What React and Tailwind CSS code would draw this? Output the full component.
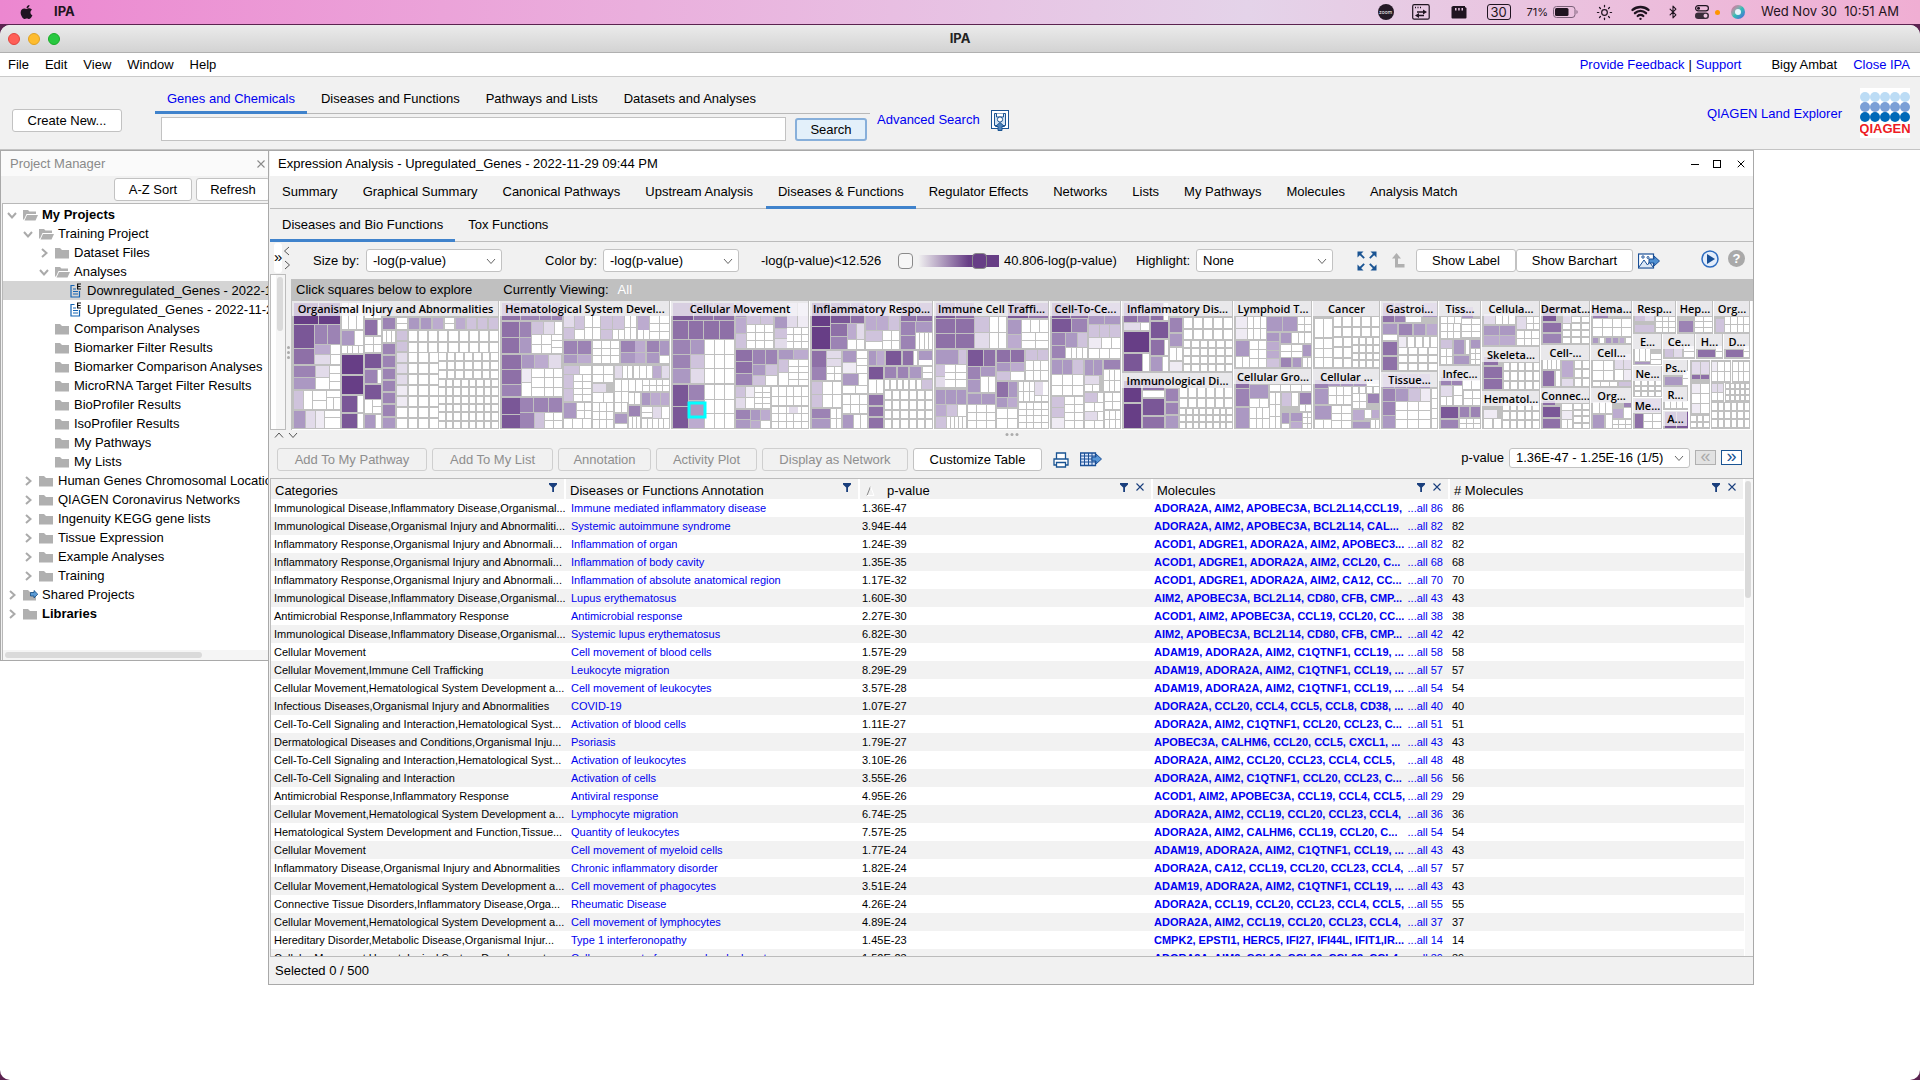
import React from "react";
import { Wifi, Bluetooth, Sun, X } from "lucide-react";
import { FaApple } from "react-icons/fa";

/* ---------- treemap ---------- */

const SHADES = ["#ffffff", "#efebf4", "#e2dbea", "#cfc3dc", "#bcabcf", "#ab98c2", "#9c83b4", "#8e70a7", "#7a5797", "#673e86"];

// Block format: "x1 y1 x2 y2 [cols rows [shades]]"; one shade digit for each cell.
// A leading "~" widens the gaps between the cells of the block.
const SECTIONS = [
  {
    dx: -28,
    sx: 2.8,
    groups: [
      {
        name: "Organismal Injury and Abnormalities",
        box: [78, 82, 657, 463],
        cells:
          "84 87 152 149 1 1 9|154 87 213 149 1 1 9|84 153 139 222 1 1 8|142 153 213 209 2 1 66|84 225 139 270 1 1 7|142 212 185 270 1 2 42|187 212 213 270 1 2|84 276 143 345 1 2 65|145 276 183 345 1 2 20|185 276 213 345 1 3|84 352 109 405 1 1 3|111 352 134 405|136 352 174 405 1 2|176 352 213 370|176 372 213 405 2 1|84 412 116 462 1 1 5|118 412 143 462 1 1 2|145 412 168 462 1 1 1|170 412 213 430|170 432 213 462|218 87 277 166 3 1|218 170 252 213 1 1 5|254 170 277 213|218 216 277 238 4 1|218 243 277 300 1 1 9|218 305 277 361 1 1 9|218 366 260 415 1 1 8|262 366 277 415|218 420 260 462 1 1 8|262 420 277 462|283 87 328 132 2 1|283 138 316 184 1 1 7|318 138 328 184|283 189 328 235 2 2|283 240 328 283 1 1 8|283 288 316 327 1 1 6|318 288 328 327|283 332 328 374 1 1 8|283 377 303 417|305 377 328 417 1 2|283 422 312 462 1 1 5|314 422 328 462|333 132 368 165 1 1 6|333 170 368 205 3 1|~333 210 368 462 1 7 6666665|372 132 400 165 1 2|~372 170 400 462 1 9 332221100|~406 132 502 165 3 1 554|507 132 533 165 1 2|~538 132 656 165 4 1 4333|~406 170 656 233 9 2|~406 238 486 462 3 7|~490 238 656 312 7 3|~490 318 656 462 8 6",
      },
      {
        name: "Hematological System Devel...",
        box: [660, 82, 1137, 463],
        cells:
          "666 87 770 137 2 1 76|772 87 833 137 2 1 66|666 143 714 238 1 2 77|716 143 747 238 1 2 65|750 143 812 180 2 1 32|814 143 833 180|750 183 804 238 2 2|806 183 833 238 1 3|666 244 720 330 1 2 77|666 332 720 366 1 1 6|722 244 831 283 3 1 542|722 285 747 366 1 2 10|750 285 785 366 1 3|787 285 833 366 2 3|666 373 716 420 1 1 8|666 422 716 462 1 1 8|718 373 833 415 3 1 666|718 417 756 462 1 1 6|758 417 785 462 1 1 3|787 417 833 462 2 2|840 127 868 195 1 2 23|870 127 896 165 1 1 3|870 167 896 195|898 127 940 195 2 2|943 127 1008 165 2 1 33|943 167 975 195 1 1 3|977 167 1008 195 2 1|1010 127 1042 195 2 2|1047 127 1077 167 1 1 4|1047 169 1077 195 2 1|1080 127 1135 195 2 3|840 202 916 240 2 1 66|840 242 916 268 2 1 54|920 202 995 268 3 3|1000 202 1038 268 1 2 65|1040 202 1068 268 1 2 44|1072 202 1106 268 1 2 65|1108 202 1135 243 1 1 5|1108 245 1135 268|840 275 882 300 1 1 3|884 275 916 300|840 303 865 380 1 2 33|868 303 916 380 2 4|920 275 978 325 2 2|920 330 958 354 1 1 2|920 356 978 384 2 1|982 275 1003 312 1 1 2|1005 275 1030 312 2 1|1035 275 1085 312 3 1|1089 275 1112 312 1 1 4|1114 275 1135 312 1 1 2|982 318 1018 384 2 2|1022 318 1058 350 2 1|1060 318 1135 350 4 2|1058 356 1135 394 3 1 544|1022 356 1054 390 2 1|840 388 874 432 1 1 5|876 388 916 432 2 2|840 435 916 462 3 1|920 388 978 462 3 3|982 388 1016 415 2 1|982 419 1016 447 1 1 5|982 449 1016 462|1022 396 1054 427 1 1 6|1022 430 1054 462 3 1|1058 398 1085 430 1 2|1089 398 1112 432 1 1 2|1114 398 1135 432|1058 435 1135 462 5 1",
      },
      {
        name: "Cellular Movement",
        box: [1140, 82, 1526, 463],
        cells:
          "1146 87 1316 137 3 1 877|1146 142 1316 195 4 1 7777|1146 198 1193 327 1 3 665|1195 198 1232 327 1 3 532|1235 198 1316 327 3 3|1146 334 1187 462 1 2 88|1189 334 1232 378 1 1 6|1189 380 1232 427 1 1 5|1189 429 1232 462 1 1 4|1235 334 1316 462 3 3|1322 87 1350 222 1 3 543|1353 87 1425 150 2 1 33|1353 152 1425 222 3 3|1430 128 1463 162 1 1 5|1465 87 1524 160 2 1 21|1430 164 1463 222 1 2 32|1465 162 1524 222 3 3|1322 228 1366 332 1 3 776|1369 228 1436 270 2 1 66|1369 272 1436 303 2 1 53|1369 306 1436 332 2 1 30|1442 228 1524 255 2 1 54|1442 258 1467 332 1 2 30|1470 258 1524 332 2 4|1322 338 1347 402 1 2 32|1350 338 1372 402 1 2 10|1374 338 1418 402 2 4|1422 338 1524 393 5 2|1322 408 1360 462 1 2 65|1363 408 1418 437 2 1 54|1363 440 1418 462 2 1 40|1422 398 1524 462 5 3|1470 398 1495 417 1 1 2",
      },
    ],
  },
  {
    dx: 507,
    sx: 3,
    groups: [
      {
        name: "Inflammatory Respo...",
        box: [33, 82, 402, 463],
        cells:
          "39 87 94 225 1 2 99|96 87 153 147 1 1 8|155 87 195 147 1 1 7|96 150 144 225 1 2 76|146 150 172 195 1 1 4|174 150 195 195 1 1 2|146 197 195 225 2 1|201 87 300 167 3 1 443|201 170 250 202 1 1 3|252 170 300 225 2 2|201 204 250 225|306 87 399 142 2 1 77|306 144 348 225 1 2 66|350 144 399 174 1 1 5|350 177 399 225 4 1|39 232 82 278 1 1 7|84 232 126 276 1 2 22|39 280 82 318 1 1 6|84 278 126 318 2 2|132 232 172 264 1 1 5|132 266 172 296 1 1 1|174 232 205 296 1 3|132 300 177 333 1 1 5|179 300 205 333|132 336 205 358 2 1|210 232 255 273 2 1 54|261 232 306 273 1 1 8|312 232 342 273 1 1 7|344 232 355 273|360 232 399 257 1 1 5|360 259 399 273|210 279 252 315 1 1 8|~258 279 366 311 3 1 665|372 279 399 311 1 2|210 319 252 358 2 1|~258 318 365 345 6 1|369 318 399 345 1 1 3|39 324 69 398 1 2 33|71 324 126 398 2 2|39 405 94 462 1 2 65|96 405 126 462 2 2|132 364 205 416 3 2|132 422 162 462 1 1 5|164 422 205 462 2 1|~210 364 252 462 1 3 777|~258 351 399 462 6 4",
      },
      {
        name: "Immune Cell Traffi...",
        box: [405, 82, 750, 463],
        cells:
          "411 87 525 133 2 1 87|411 136 525 221 2 2 7777|528 128 570 221 1 2 32|572 128 620 221 2 2|627 87 747 133 2 1 87|627 137 666 221 1 2 54|668 137 747 174 3 1|668 176 747 221 2 2|411 228 443 270 1 1 5|445 228 477 270 1 1 5|479 228 501 270 1 1 3|411 273 437 340 1 2 32|439 273 501 340 2 3|411 348 501 389 3 1 555|411 392 442 462 1 2 43|444 392 474 426 1 1 3|476 392 501 426|444 428 501 462 5 1|507 228 552 276 1 1 8|554 228 588 276 1 1 7|507 279 543 354 1 2 65|545 279 588 306 1 1 5|545 308 588 354 2 1|507 360 588 390 2 1 55|507 393 588 462 3 3|594 228 675 264 2 1 77|594 266 675 290 2 1 54|594 293 675 318 2 1 30|594 324 627 369 1 1 7|629 324 654 369 1 1 5|594 371 654 400 2 1 54|594 404 654 462 2 2|680 228 747 258 2 1 33|680 261 747 318 3 2|660 324 704 380 3 2|708 324 731 364 1 1 2|733 324 747 364|708 366 747 380 2 1|660 386 747 462 4 4",
      },
      {
        name: "Cell-To-Ce...",
        box: [753, 82, 966, 463],
        cells:
          "759 87 866 131 2 1 87|759 136 817 173 1 1 8|819 136 864 173 1 1 6|759 177 798 212 1 1 6|800 177 834 218 1 1 5|836 177 864 218 1 1 3|759 215 798 251 1 1 6|800 221 864 251 4 1|870 87 963 150 2 1 55|870 153 963 189 3 1 333|870 192 907 222 1 1 1|909 192 963 222 2 1|870 224 963 251 3 1|759 258 852 300 3 1 553|759 303 852 363 3 2|858 258 910 303 2 1 55|915 258 963 285 1 1 6|915 289 963 350 3 2|858 307 900 330 1 1 2|858 333 900 350 2 1|759 369 795 462 1 3 331|798 369 852 462 2 4|858 357 894 384 1 1 3|896 357 911 384|858 387 911 412 2 1|917 357 963 405 2 2|858 415 895 438 1 1 2|897 415 911 438|858 441 911 462 2 1|917 412 963 462 3 2",
      },
      {
        name: "Inflammatory Dis...",
        box: [969, 82, 1303, 293],
        cells:
          "975 87 1014 143 1 1 7|1016 87 1050 143 1 1 6|975 147 1023 168 1 1 2|1025 147 1050 168|975 174 1050 234 1 1 9|975 240 1028 291 1 1 8|1031 240 1050 291|1056 87 1092 138 1 1 7|1094 87 1107 138|1056 143 1107 192 1 1 8|1056 198 1095 243 1 1 7|1097 198 1107 243|1056 249 1089 291 1 1 5|1091 249 1107 291|1113 132 1149 174 1 1 6|1113 180 1149 216 1 1 5|1113 221 1149 258 2 1|1113 264 1149 291 1 1 1|~1155 132 1300 196 5 2|~1155 202 1300 291 6 4",
      },
      {
        name: "Immunological Di...",
        box: [969, 298, 1303, 463],
        cells:
          "975 320 1026 384 1 1 9|975 390 1026 462 1 1 9|1032 320 1095 348 1 1 7|1032 350 1095 369|1032 375 1095 423 1 1 8|1032 429 1095 462 1 1 7|~1101 345 1137 462 1 3 665|~1143 343 1300 400 6 2|~1143 406 1300 462 8 3",
      },
    ],
  },
  {
    dx: 977,
    sx: 3,
    groups: [
      {
        name: "Lymphoid T...",
        box: [-104, 82, 128, 281],
        cells:
          "-98 130 -66 196 1 2 11|-64 128 -8 196 3 2|-5 130 40 172 1 1 5|42 130 84 172 1 1 5|88 130 127 172 2 2|-98 202 -60 247 1 1 5|-58 202 -8 280 2 3|-98 250 -60 280 2 1|-5 178 30 280 1 4 5443|36 178 66 207 1 1 5|68 178 127 207 3 1|36 212 98 248 2 2|102 212 127 246 1 1 5|36 252 66 279 1 1 6|72 252 96 279 1 1 5|102 252 127 279 2 1",
      },
      {
        name: "Cellular Gro...",
        box: [-104, 286, 128, 463],
        cells:
          "-98 318 -60 343 1 1 7|-98 345 -60 395 1 1 6|-98 401 -60 462 1 1 5|-57 332 -3 372 1 1 5|-57 374 -3 398 2 1|-57 402 0 462 3 2|3 332 127 352 4 1|3 358 33 462 2 3|38 358 67 397 1 1 3|69 358 88 397|92 357 127 390 1 1 6|92 394 127 412 2 1|38 417 60 448 1 1 5|65 417 98 440 1 1 5|65 444 98 462 1 1 4|102 417 127 462 2 3|38 450 60 462",
      },
      { name: "Cancer", box: [132, 82, 333, 281], cells: "138 135 190 190 2 1|138 196 190 280 2 3|~194 128 331 187 5 2|~194 193 246 280 2 3|~252 193 331 280 4 4" },
      {
        name: "Cellular ...",
        box: [132, 286, 333, 463],
        cells:
          "138 318 176 342 1 1 6|138 345 176 390 1 1 5|138 396 186 434 1 1 5|138 437 186 462 2 1|178 318 330 335 4 1 5550|180 338 246 390 3 2|190 395 247 462 2 3|~252 338 330 356 4 1|297 361 330 388 1 1 6|252 361 292 402 2 2|252 408 285 438 1 1 4|309 408 330 432 1 1 4|288 408 305 432|252 444 303 462 1 1 5|306 438 330 462 2 1",
      },
      {
        name: "Gastroi...",
        box: [336, 82, 506, 291],
        cells:
          "342 87 375 143 1 1 7|377 87 408 143 1 1 6|412 128 456 143|462 87 504 129 1 1 5|342 151 384 180 1 1 5|390 151 429 183 1 1 6|435 151 468 182 1 1 5|474 151 504 182 1 1 4|342 183 384 198|342 205 384 243 1 1 7|342 249 384 289 1 1 7|390 189 412 218 1 1 1|~417 189 504 218 4 1|~390 223 504 289 4 3",
      },
      {
        name: "Tissue...",
        box: [336, 295, 506, 463],
        cells: "342 300 484 342 4 1 5555|342 346 378 462 1 3 665|381 346 417 381 1 1 5|420 346 453 381 1 1 3|455 346 484 381 1 1 1|381 384 484 462 3 3|490 346 504 462 1 4",
      },
      {
        name: "Tiss...",
        box: [510, 82, 635, 272],
        cells: "515 128 575 147 3 1|578 100 612 132 1 1 5|515 150 573 192 3 2|580 135 634 190 2 3|515 198 550 222 1 1 3|555 198 586 241 1 1 5|590 198 601 240|606 198 634 221 1 1 5|515 226 550 270 2 2|555 247 600 270 1 1 5|606 226 634 270 2 3",
      },
      {
        name: "Infec...",
        box: [510, 277, 635, 463],
        cells: "515 310 546 333 1 1 6|549 310 579 333 1 1 6|582 318 634 345 2 1|515 337 550 366 1 1 2|515 369 550 392 2 1|554 337 580 392 1 2|584 350 634 392 2 2|515 399 567 432 1 1 8|573 399 600 429 1 1 6|606 399 634 429 1 1 6|515 438 567 462 1 1 6|573 435 634 462 3 2",
      },
      { name: "Cellula...", box: [639, 82, 813, 215], cells: "645 120 678 150 1 1 2|680 120 738 150 3 1|645 156 738 212 2 2 5544|744 128 772 165 1 1 2|774 128 810 165 2 2|744 170 810 212 3 2" },
      { name: "Skeleta...", box: [639, 219, 813, 347], cells: "645 250 686 272 1 1 7|645 279 699 345 1 2 77|~705 267 810 345 5 3" },
      { name: "Hematol...", box: [639, 351, 813, 463], cells: "645 408 684 431 1 1 1|~645 436 697 462 2 1|~703 388 810 462 5 3" },
      { name: "Dermat...", box: [816, 82, 963, 210], cells: "822 100 861 141 1 1 8|822 147 876 174 1 1 7|822 180 876 206 1 1 6|~882 128 961 206 3 4|882 110 905 147 1 1 2" },
      { name: "Cell-...", box: [816, 214, 963, 338], cells: "822 258 873 285 4 1|822 291 855 335 1 1 7|860 291 873 335|879 260 912 310 1 1 4|879 315 912 335 1 1 2|~917 262 961 335 2 3" },
      { name: "Connec...", box: [816, 342, 963, 463], cells: "822 380 858 394 1 1 7|822 399 873 429 1 1 8|822 436 873 462 1 1 7|879 412 909 434 1 1 1|879 390 909 407|879 437 909 462 2 1|~914 390 961 462 2 4" },
      { name: "Hema...", box: [966, 82, 1089, 210], cells: "972 110 1017 132 1 1 6|972 134 1087 185 4 2|~972 192 1087 206 6 1 505540" },
      { name: "Cell...", box: [966, 214, 1089, 338], cells: "972 260 1033 317 2 2|1037 240 1087 285 2 1 22|1037 287 1087 317 2 1 01|972 323 1045 335 3 1|1050 323 1087 335 1 1 3" },
      { name: "Org...", box: [966, 342, 1089, 463], cells: "972 385 1028 417 3 1|972 423 1005 462 1 1 5|1010 423 1028 462|1032 405 1062 432 1 1 4|1064 388 1087 398 1 1 6|1064 402 1087 432|1032 437 1087 462 3 2" },
      { name: "Resp...", box: [1093, 82, 1221, 176], cells: "1098 110 1127 140 1 1 3|1129 110 1155 140 1 1 2|1098 152 1156 173 1 1 3|1160 128 1218 173 3 3" },
      { name: "Hep...", box: [1225, 82, 1331, 176], cells: "1230 140 1273 173 1 1 6|1278 128 1328 173 2 3" },
      { name: "Org...", box: [1335, 82, 1442, 176], cells: "1341 135 1365 173 1 1 3|1369 128 1440 173 4 2" },
      { name: "E...", box: [1093, 180, 1178, 271], cells: "1098 225 1143 260 3 1|1098 263 1143 270 1 1 5|1146 240 1177 270 1 2" },
      { name: "Ce...", box: [1182, 180, 1278, 253], cells: "1188 215 1240 250 2 1 32|1244 215 1275 250 1 2" },
      { name: "H...", box: [1282, 180, 1361, 253], cells: "1288 228 1337 250 1 1 7|1341 215 1358 250 1 2" },
      { name: "D...", box: [1365, 180, 1442, 253], cells: "1371 228 1421 250 1 1 7|1425 215 1440 250 1 2" },
      { name: "Ne...", box: [1093, 275, 1178, 367], cells: "~1098 320 1177 367 4 3" },
      { name: "Me...", box: [1093, 371, 1178, 463], cells: "1098 376 1177 414 1 1 5|1098 420 1122 462 1 1 7|1126 420 1177 462 2 2" },
      { name: "Ps...", box: [1182, 257, 1258, 336], cells: "1188 309 1239 332 1 1 5|1243 290 1256 332 1 2" },
      { name: "R...", box: [1182, 339, 1258, 406], cells: "1188 380 1256 403 4 1" },
      { name: "A...", box: [1182, 410, 1258, 463], cells: "1188 415 1256 462 2 1 88" },
      { box: [1263, 257, 1323, 323], cells: "1269 265 1293 300 1 1 2|1297 265 1320 300 1 1 2|1269 303 1320 315 2 1 77" },
      { box: [1326, 257, 1385, 323], cells: "1330 265 1382 320 3 2 100000" },
      { box: [1389, 257, 1442, 323], cells: "1393 265 1440 320 3 2" },
      { box: [1263, 327, 1323, 419], cells: "1268 330 1320 418 2 3 100010" },
      { box: [1326, 327, 1365, 381], cells: "1330 330 1362 378 2 2 2200" },
      { box: [1369, 327, 1442, 381], cells: "~1372 330 1440 378 5 3" },
      { box: [1263, 423, 1323, 463], cells: "~1267 427 1320 460 3 2" },
      { box: [1326, 385, 1442, 463], cells: "~1330 388 1440 460 6 3" },
    ],
  },
];

function groupCells(group, X, Y) {
  const out = [];
  group.cells.split("|").forEach((block) => {
    const gap = block[0] === "~" ? 2 : 1;
    const p = block.replace("~", "").split(" ");
    const x1 = X(+p[0]);
    const y1 = Y(+p[1]);
    const x2 = X(+p[2]);
    const y2 = Y(+p[3]);
    const cols = +(p[4] || 1);
    const rows = +(p[5] || 1);
    const shades = p[6] || "";
    for (let r = 0; r < rows; r++) {
      for (let c = 0; c < cols; c++) {
        const w = (x2 - x1 + gap) / cols;
        const h = (y2 - y1 + gap) / rows;
        const cx = Math.round(x1 + c * w);
        const cy = Math.round(y1 + r * h);
        out.push({
          x: cx,
          y: cy,
          w: Math.max(1, Math.round(x1 + (c + 1) * w) - gap - cx),
          h: Math.max(1, Math.round(y1 + (r + 1) * h) - gap - cy),
          fill: SHADES[+(shades[r * cols + c] || 0)],
        });
      }
    }
  });
  return out;
}

function Treemap() {
  const Y = (v) => Math.round(v / 3) - 27;
  return (
    <svg viewBox="0 0 1460 129" className="block w-full bg-white" role="img" aria-label="Treemap of diseases and functions">
      {SECTIONS.map((s, si) => {
        const X = (v) => Math.round(v / s.sx) + s.dx;
        return s.groups.map((g, gi) => {
          const [x1, y1, x2, y2] = [X(g.box[0]), Y(g.box[1]), X(g.box[2]), Y(g.box[3])];
          return (
            <g key={si + "-" + gi}>
              <rect x={x1} y={y1} width={x2 - x1} height={y2 - y1 + 1} fill="#c0c0c0" />
              {groupCells(g, X, Y).map((c, i) => (
                <rect key={i} x={c.x} y={c.y} width={c.w} height={c.h} fill={c.fill} />
              ))}
              {g.name && (
                <>
                  <rect x={x1} y={y1} width={x2 - x1 - 1} height="15" fill="#f6f4f9" fillOpacity="0.76" />
                  <text x={(x1 + x2) / 2} y={y1 + 12} textAnchor="middle" fontSize="11" fontWeight="600" fontFamily='"Open Sans", "Noto Sans", sans-serif' fill="#000">
                    {g.name}
                  </text>
                </>
              )}
            </g>
          );
        });
      })}
      <rect x="397" y="102" width="16" height="14" fill="none" stroke="#00ffff" strokeWidth="3" />
    </svg>
  );
}

/* ---------- icons ---------- */

const Folder = ({ open }) => (
  <svg viewBox="0 0 15 12" className="h-3 w-[15px] flex-none" fill="#b0b0b0">
    {open ? (
      <>
        <path d="M0 1h5l1.500 1.500H13V5H3.500L1 10.500H0z" />
        <path d="M4 6h11l-2.500 5.500H1.500z" />
      </>
    ) : (
      <path d="M0 1h5l2 2h7v8.500H0z" />
    )}
  </svg>
);

const SharedFolder = () => (
  <svg viewBox="0 0 15 12" className="h-3 w-[15px] flex-none">
    <path d="M0 1h5l2 2h6v8.500H0z" fill="#b0b0b0" />
    <path d="M7.500 3.500h3.500V1.500L14.800 5.200 11 9V7H7.500z" fill="#5b9bd5" stroke="#174f86" strokeWidth="0.800" />
  </svg>
);

const Doc = () => (
  <svg viewBox="0 0 12 15" className="h-[15px] w-3 flex-none" fill="none" stroke="#1464b4" strokeWidth="1.200">
    <path d="M4.500 2.500H1v11.500h8.500V8" />
    <path d="M3 6h3M3 8.500h5M3 11h5" />
    <path d="M11 1H7.600v5H11M7.600 3.500h3" stroke="#111" />
  </svg>
);

const Chevron = ({ dir = "right", className = "" }) => {
  const d = { right: "M3 1l4.500 4L3 9", left: "M7 1L2.500 5 7 9", down: "M1 3l4 4.500L9 3", up: "M1 7.500L5 3l4 4.500" }[dir];
  return (
    <svg viewBox="0 0 10 10" className={"h-[10px] w-[10px] flex-none " + className} fill="none" stroke="currentColor">
      <path d={d} />
    </svg>
  );
};

const Funnel = () => (
  <svg viewBox="0 0 8 9" className="h-[9px] w-2" fill="#1a3f7d">
    <path d="M0 0h8v1.500L5 4.500V9H3.200V4.500L0 1.500z" />
  </svg>
);

const Cross = ({ className = "" }) => (
  <svg viewBox="0 0 8 8" className={"h-2 w-2 " + className} fill="none" stroke="currentColor" strokeWidth="1.100">
    <path d="M.5.5l7 7M7.500.5l-7 7" />
  </svg>
);

const QiagenLogo = () => (
  <svg viewBox="0 0 50 50" className="h-[50px] w-[50px]" role="img" aria-label="QIAGEN">
    <rect width="50" height="50" fill="#fff" />
    {["#bcdcf5", "#7b9fd6", "#0069b8"].map((c, r) => [0, 1, 2, 3, 4].map((i) => <circle key={r + "" + i} cx={5 + i * 10} cy={9 + r * 10} r="5" fill={c} />))}
    <text x="25" y="45" textAnchor="middle" fontSize="13" fontWeight="700" fontFamily='"Liberation Sans", sans-serif' fill="#ed1c24">
      QIAGEN
    </text>
  </svg>
);

const SaveSearch = () => (
  <svg viewBox="0 0 18 21" className="h-[21px] w-[18px]" fill="none" stroke="#1a5493">
    <rect x="0.500" y="0.500" width="17" height="18" fill="#fff" />
    <path d="M3.500 3.500h11v12h-11z" fill="#d3e4f3" />
    <path d="M5.500 3.500v3.500h7V3.500" fill="#fff" />
    <circle cx="9" cy="9.500" r="2.600" fill="#fff" />
    <path d="M9 12.500l4.500 4H11V20.500H7V16.500H4.500z" fill="#4f83b8" />
  </svg>
);

const Expand = () => (
  <svg viewBox="0 0 20 20" className="h-5 w-5" fill="#1a5493" stroke="#1a5493" strokeWidth="1.800">
    {[0, 90, 180, 270].map((a) => (
      <g key={a} transform={`rotate(${a} 10 10)`}>
        <path d="M3 3l4.200 4.200" />
        <path d="M0.500 0.500h6l-6 6z" strokeWidth="0" />
      </g>
    ))}
  </svg>
);

const UpLevel = () => (
  <svg viewBox="0 0 13 15" className="h-[15px] w-[13px]" fill="#b0b0b0">
    <path d="M4.500 0L9 5.500H6V11h6.500v3.500H3V5.500H0z" />
  </svg>
);

const ExportImage = () => (
  <svg viewBox="0 0 22 16" className="h-4 w-[22px]" fill="#fff" stroke="#1a4f96">
    <rect x="0.500" y="1" width="15" height="14" strokeWidth="1.200" />
    <path d="M1 14l5-7 3.500 5 2-3 3.500 5" fill="#dce8f6" />
    <circle cx="5" cy="4" r="1.200" />
    <circle cx="10" cy="4.500" r="1" />
    <path d="M11 6h5V3l5.500 5-5.500 5v-3h-5z" fill="#4f8fd0" />
  </svg>
);

const Printer = () => (
  <svg viewBox="0 0 16 16" className="h-4 w-4" fill="#fff" stroke="#1a5493" strokeWidth="1.300">
    <path d="M3.500 7V1h9v6" />
    <path d="M1 7h14v6H1z" />
    <path d="M3.500 10.500h9V15h-9z" />
  </svg>
);

const ExportTable = () => (
  <svg viewBox="0 0 22 15" className="h-[15px] w-[22px]" fill="none" stroke="#1a4f96">
    <path d="M.5 1h15v12.500H.5z" fill="#dbe6fa" strokeWidth="1.300" />
    <path d="M.5 4h15M.5 7h15M.5 10h15M4.500 1v12.500M8.500 1v12.500M12 1v12.500" />
    <path d="M12 5h4V2l5.500 5-5.500 5V9h-4z" fill="#5a96d6" />
  </svg>
);

const Play = () => (
  <svg viewBox="0 0 18 18" className="h-[18px] w-[18px]">
    <circle cx="9" cy="9" r="8" fill="#e3edfb" stroke="#2d6cc0" strokeWidth="1.500" />
    <path d="M6 4l8 5-8 5z" fill="#174f96" />
  </svg>
);

/* ---------- controls ---------- */

function Select({ id, value, className }) {
  return (
    <div className={"relative text-black " + className}>
      <select id={id} defaultValue={value} className="h-full w-full appearance-none rounded-[3px] border border-[#c2c2c2] bg-white pl-[6px] pr-6 text-[13px] leading-4">
        <option>{value}</option>
      </select>
      <Chevron dir="down" className="pointer-events-none absolute right-[6px] top-1/2 -translate-y-1/2 text-[#666]" />
    </div>
  );
}

function Button({ children, disabled, className = "" }) {
  return (
    <button
      disabled={disabled}
      className={"flex h-[23px] flex-none items-center justify-center whitespace-nowrap rounded-[3px] border border-[#c2c2c2] bg-white disabled:border-[#cfcfcf] disabled:bg-[#f1f1f1] disabled:text-[#8e8e8e] " + className}
    >
      {children}
    </button>
  );
}

/* ---------- system bar ---------- */

function SystemBar() {
  return (
    <header className="flex h-6 items-center bg-linear-to-r from-[#ec87d0] via-[#e4d3e9] via-65% to-[#f0aed3] pl-[19px] pr-[21px] font-['Inter',sans-serif] text-[13px] text-[#1f1420]">
      <FaApple className="h-4 w-[15px]" />
      <span className="ml-5 font-bold">IPA</span>
      <div className="ml-auto flex items-center">
        <span className="flex h-4 w-4 items-center justify-center rounded-full bg-[#241a26] text-[5px] leading-none text-white">zoom</span>
        <svg viewBox="0 0 18 16" className="ml-[18px] h-4 w-[18px]" fill="none" stroke="currentColor" strokeWidth="1.200">
          <rect x="0.700" y="0.700" width="16.500" height="14.500" rx="1.500" />
          <path d="M3 3.500h1M5.500 3.500h1M8 3.500h1" strokeWidth="1.500" />
          <path d="M5 8h7M5 11.500h7" strokeWidth="1.600" />
          <path d="M11 5.500l4 2.500-4 2.500zM7 9l-4 2.500L7 14z" fill="currentColor" strokeWidth="0" />
        </svg>
        <svg viewBox="0 0 16 14" className="ml-[21px] h-[14px] w-4" fill="currentColor">
          <path d="M2 1h12v1l1.500 1v9.500a1 1 0 01-1 1h-13a1 1 0 01-1-1V2z" />
          <path d="M4 3h1.500v2.500H4zM7.200 3h1.500v2.500H7.200zM10.500 3H12v2.500h-1.500z" fill="#e8c4e2" />
        </svg>
        <span className="ml-5 flex h-4 w-6 items-center justify-center rounded-[3px] border border-[#1f1420] leading-none">30</span>
        <span className="ml-4 text-[11px]">71%</span>
        <svg viewBox="0 0 26 12" className="ml-[5px] h-3 w-[26px]">
          <rect x="0.500" y="0.500" width="21.500" height="11" rx="3" fill="none" stroke="#7a6078" />
          <rect x="2" y="2" width="13.500" height="8" rx="1.500" fill="#1f1420" />
          <path d="M23.500 4v4c1.500-.5 1.500-3.500 0-4z" fill="#7a6078" />
        </svg>
        <Sun className="ml-[17px] h-[17px] w-[17px]" strokeWidth={1.7} />
        <Wifi className="ml-[18px] h-[19px] w-[19px]" strokeWidth={3} />
        <Bluetooth className="ml-[16px] h-4 w-[14px]" strokeWidth={1.9} />
        <svg viewBox="0 0 14 14" className="ml-[15px] h-[14px] w-[14px]">
          <rect x="0.600" y="0.600" width="12.800" height="5.300" rx="2.600" fill="none" stroke="#1f1420" strokeWidth="1.200" />
          <circle cx="3.500" cy="3.200" r="1.500" fill="#1f1420" />
          <rect y="7.500" width="14" height="6.500" rx="3.200" fill="#3a2c3a" />
          <circle cx="10.500" cy="10.700" r="2" fill="#eec4e0" />
        </svg>
        <span className="ml-[6px] h-[5px] w-[5px] rounded-full bg-[#ff9500]" />
        <span className="ml-[11px] flex h-[14px] w-[14px] items-center justify-center rounded-full bg-linear-to-br from-[#e0569c] via-[#31bfb3] to-[#4a56d8]">
          <span className="h-[6px] w-[6px] rounded-full bg-[#e8f6fb]" />
        </span>
        <span className="ml-4 whitespace-nowrap">Wed Nov 30&nbsp; 10:51 AM</span>
      </div>
    </header>
  );
}

/* ---------- top area ---------- */

const link = "text-[#0000f0]";

function TopArea() {
  return (
    <>
      <div className="relative flex h-7 items-center justify-center border-b border-[#b0b0b0] bg-linear-to-b from-[#ebebeb] to-[#d3d3d3] font-['Inter',sans-serif] text-[13px] font-bold text-[#222]">
        <div className="absolute left-2 flex gap-2">
          <button aria-label="Close" className="h-3 w-3 rounded-full border border-[#e0443e] bg-[#ff5f57]" />
          <button aria-label="Minimize" className="h-3 w-3 rounded-full border border-[#dea123] bg-[#febc2e]" />
          <button aria-label="Zoom" className="h-3 w-3 rounded-full border border-[#1aab29] bg-[#28c840]" />
        </div>
        IPA
      </div>
      <nav className="flex h-6 items-center border-b border-[#cacaca] bg-white px-2 text-[13px]">
        <div className="flex gap-4">
          {["File", "Edit", "View", "Window", "Help"].map((m) => (
            <button key={m}>{m}</button>
          ))}
        </div>
        <div className="ml-auto flex items-center pr-[2px]">
          <a href="#feedback" className={link}>Provide Feedback</a>
          <span className="px-1">|</span>
          <a href="#support" className={link}>Support</a>
          <span className="ml-[30px]">Bigy Ambat</span>
          <a href="#close" className={link + " ml-4"}>Close IPA</a>
        </div>
      </nav>
      <div className="flex h-[73px] border-b border-[#c4c4c4] bg-[#f1f1f1] pl-3 pr-[10px] text-[13px]">
        <Button className="mt-8 w-[110px]">Create New...</Button>
        <div className="ml-[33px] mt-[7px] w-[715px]">
          <div role="tablist" className="flex h-[30px] gap-[2px] border-b border-[#b8b8b8]">
            {["Genes and Chemicals", "Diseases and Functions", "Pathways and Lists", "Datasets and Analyses"].map((t, i) => (
              <button
                key={t}
                role="tab"
                aria-selected={i === 0}
                className={"-mb-px whitespace-nowrap px-3 pb-0 pt-[2px] " + (i === 0 ? "border-b-[3px] border-[#4083cc] text-[#0000f0]" : "border-b-[3px] border-transparent")}
              >
                {t}
              </button>
            ))}
          </div>
          <form className="mt-[3px] flex items-center gap-[9px] pl-[6px] pr-[3px]" onSubmit={(e) => e.preventDefault()}>
            <input type="search" aria-label="Search genes and chemicals" className="h-6 min-w-0 flex-1 border border-[#c2c2c2] bg-white px-2" />
            <button className="h-[23px] w-[72px] rounded-[3px] border-2 border-[#87afda] bg-[#e3f0fa] leading-none">Search</button>
          </form>
        </div>
        <a href="#advanced" className={link + " ml-[7px] mt-[33px] h-5 leading-5"}>Advanced Search</a>
        <button aria-label="Save search" className="ml-[11px] mt-[33px] h-[21px]">
          <SaveSearch />
        </button>
        <a href="#explorer" className={link + " ml-auto mt-[27px] h-5 leading-5"}>QIAGEN Land Explorer</a>
        <div className="ml-[18px] mt-[11px]">
          <QiagenLogo />
        </div>
      </div>
    </>
  );
}

/* ---------- project manager ---------- */

const TREE = [
  [0, "open", "My Projects", "bold"],
  [1, "open", "Training Project"],
  [2, "closed", "Dataset Files"],
  [2, "open", "Analyses"],
  [3, "doc", "Downregulated_Genes - 2022-11-29", "selected"],
  [3, "doc", "Upregulated_Genes - 2022-11-29"],
  [2, "leaf", "Comparison Analyses"],
  [2, "leaf", "Biomarker Filter Results"],
  [2, "leaf", "Biomarker Comparison Analyses"],
  [2, "leaf", "MicroRNA Target Filter Results"],
  [2, "leaf", "BioProfiler Results"],
  [2, "leaf", "IsoProfiler Results"],
  [2, "leaf", "My Pathways"],
  [2, "leaf", "My Lists"],
  [1, "closed", "Human Genes Chromosomal Location"],
  [1, "closed", "QIAGEN Coronavirus Networks"],
  [1, "closed", "Ingenuity KEGG gene lists"],
  [1, "closed", "Tissue Expression"],
  [1, "closed", "Example Analyses"],
  [1, "closed", "Training"],
  [0, "shared", "Shared Projects"],
  [0, "closed", "Libraries", "bold"],
];
const INDENT = ["pl-[4px]", "pl-[20px]", "pl-[36px]", "pl-[51px]"];

function ProjectManager() {
  return (
    <aside className="w-[268px] flex-none overflow-hidden border-b border-l border-t border-[#a9a9a9] bg-[#f1f1f1] text-[13px]">
      <div className="flex h-[25px] items-center bg-[#fafafa] pl-[9px] pr-[3px] pt-px text-[#8a8a8a]">
        Project Manager
        <button aria-label="Close project manager" className="ml-auto">
          <Cross />
        </button>
      </div>
      <div className="flex h-[27px] items-center gap-[4px] pl-[113px]">
        <Button className="w-[78px]">A-Z Sort</Button>
        <Button className="w-[74px]">Refresh</Button>
      </div>
      <div className="ml-px border-l border-t border-[#b8b8b8] bg-white">
        <ul className="h-[446px] overflow-hidden pt-px">
          {TREE.map(([depth, kind, label, mod]) => (
            <li key={label} className={"flex h-[19px] items-center whitespace-nowrap " + INDENT[depth] + (mod === "selected" ? " bg-[#d4d4d4]" : "") + (mod === "bold" ? " font-bold" : "")}>
              <span className="mr-[6px] w-[10px] flex-none text-[#aaa]">
                {kind !== "leaf" && kind !== "doc" && <Chevron dir={kind === "open" ? "down" : "right"} className="[stroke-width:2]" />}
              </span>
              {kind === "doc" ? <Doc /> : kind === "shared" ? <SharedFolder /> : <Folder open={kind === "open"} />}
              <span className={kind === "doc" ? "ml-[5px]" : "ml-1"}>{label}</span>
            </li>
          ))}
        </ul>
        <div className="h-[10px] bg-[#f5f5f5] pl-[2px] pt-[2px]">
          <div className="h-[6px] w-[197px] rounded-full bg-[#dadada]" />
        </div>
      </div>
    </aside>
  );
}

/* ---------- analysis window ---------- */

const TABS = ["Summary", "Graphical Summary", "Canonical Pathways", "Upstream Analysis", "Diseases & Functions", "Regulator Effects", "Networks", "Lists", "My Pathways", "Molecules", "Analysis Match"];

function Tabs({ items, active }) {
  return (
    <div role="tablist" className="flex h-[33px] gap-px border-b border-[#bcbcbc] text-[13px]">
      {items.map((t) => (
        <button key={t} role="tab" aria-selected={t === active} className={"-mb-px whitespace-nowrap border-b-[3px] px-3 pt-[2px] " + (t === active ? "border-[#4083cc]" : "border-transparent")}>
          {t}
        </button>
      ))}
    </div>
  );
}

const THUMB =
  "pointer-events-none absolute inset-0 h-full w-full appearance-none bg-transparent [&::-webkit-slider-thumb]:pointer-events-auto [&::-webkit-slider-thumb]:h-4 [&::-webkit-slider-thumb]:w-[15px] [&::-webkit-slider-thumb]:appearance-none [&::-webkit-slider-thumb]:rounded-[4px] [&::-webkit-slider-thumb]:border [&::-webkit-slider-thumb]:border-[#8a8a8a] ";

function MapToolbar() {
  return (
    <div className="flex h-[37px] items-center whitespace-nowrap pr-2 text-[13px]">
      <label htmlFor="size-by" className="ml-[22px] w-[53px]">Size by:</label>
      <Select id="size-by" value="-log(p-value)" className="h-[23px] w-[136px]" />
      <label htmlFor="color-by" className="ml-[43px] w-[58px]">Color by:</label>
      <Select id="color-by" value="-log(p-value)" className="h-[23px] w-[136px]" />
      <span className="ml-[22px] w-[137px]">-log(p-value)&lt;12.526</span>
      <div className="relative h-4 w-[101px]">
        <div className="absolute inset-x-0 top-[2px] h-3 bg-linear-to-r from-transparent from-20% to-[#673e86] to-70%" />
        <input type="range" aria-label="Lower bound" defaultValue="0" className={THUMB + "[&::-webkit-slider-thumb]:bg-[#f6f6f6]"} />
        <input type="range" aria-label="Upper bound" defaultValue="86" className={THUMB + "[&::-webkit-slider-thumb]:bg-[#673e86]"} />
      </div>
      <span className="ml-[5px] w-[132px]">40.806-log(p-value)</span>
      <label htmlFor="highlight" className="w-[60px]">Highlight:</label>
      <Select id="highlight" value="None" className="h-[23px] w-[137px]" />
      <button aria-label="Fit to window" className="ml-[24px]"><Expand /></button>
      <button aria-label="Up one level" className="ml-[15px]"><UpLevel /></button>
      <Button className="ml-[11px] w-[100px]">Show Label</Button>
      <Button className="w-[117px]">Show Barchart</Button>
      <button aria-label="Export image" className="ml-[5px]"><ExportImage /></button>
      <button aria-label="Play tutorial" className="ml-auto pb-1"><Play /></button>
      <button aria-label="Help" className="mb-1 ml-[9px] flex h-[17px] w-[17px] items-center justify-center rounded-full bg-[#a9a9a9] font-bold leading-none text-white">?</button>
    </div>
  );
}

const IM = "Immunological Disease,Inflammatory Disease,Organismal...";
const IR = "Inflammatory Response,Organismal Injury and Abnormali...";
const CH = "Cellular Movement,Hematological System Development a...";
const CS = "Cell-To-Cell Signaling and Interaction,Hematological Syst...";
const ROWS = [
  [IM, "Immune mediated inflammatory disease", "1.36E-47", "ADORA2A, AIM2, APOBEC3A, BCL2L14,CCL19,", 86],
  ["Immunological Disease,Organismal Injury and Abnormaliti...", "Systemic autoimmune syndrome", "3.94E-44", "ADORA2A, AIM2, APOBEC3A, BCL2L14, CAL...", 82],
  [IR, "Inflammation of organ", "1.24E-39", "ACOD1, ADGRE1, ADORA2A, AIM2, APOBEC3...", 82],
  [IR, "Inflammation of body cavity", "1.35E-35", "ACOD1, ADGRE1, ADORA2A, AIM2, CCL20, C...", 68],
  [IR, "Inflammation of absolute anatomical region", "1.17E-32", "ACOD1, ADGRE1, ADORA2A, AIM2, CA12, CC...", 70],
  [IM, "Lupus erythematosus", "1.60E-30", "AIM2, APOBEC3A, BCL2L14, CD80, CFB, CMP...", 43],
  ["Antimicrobial Response,Inflammatory Response", "Antimicrobial response", "2.27E-30", "ACOD1, AIM2, APOBEC3A, CCL19, CCL20, CC...", 38],
  [IM, "Systemic lupus erythematosus", "6.82E-30", "AIM2, APOBEC3A, BCL2L14, CD80, CFB, CMP...", 42],
  ["Cellular Movement", "Cell movement of blood cells", "1.57E-29", "ADAM19, ADORA2A, AIM2, C1QTNF1, CCL19, ...", 58],
  ["Cellular Movement,Immune Cell Trafficking", "Leukocyte migration", "8.29E-29", "ADAM19, ADORA2A, AIM2, C1QTNF1, CCL19, ...", 57],
  [CH, "Cell movement of leukocytes", "3.57E-28", "ADAM19, ADORA2A, AIM2, C1QTNF1, CCL19, ...", 54],
  ["Infectious Diseases,Organismal Injury and Abnormalities", "COVID-19", "1.07E-27", "ADORA2A, CCL20, CCL4, CCL5, CCL8, CD38, ...", 40],
  [CS, "Activation of blood cells", "1.11E-27", "ADORA2A, AIM2, C1QTNF1, CCL20, CCL23, C...", 51],
  ["Dermatological Diseases and Conditions,Organismal Inju...", "Psoriasis", "1.79E-27", "APOBEC3A, CALHM6, CCL20, CCL5, CXCL1, ...", 43],
  [CS, "Activation of leukocytes", "3.10E-26", "ADORA2A, AIM2, CCL20, CCL23, CCL4, CCL5,", 48],
  ["Cell-To-Cell Signaling and Interaction", "Activation of cells", "3.55E-26", "ADORA2A, AIM2, C1QTNF1, CCL20, CCL23, C...", 56],
  ["Antimicrobial Response,Inflammatory Response", "Antiviral response", "4.95E-26", "ACOD1, AIM2, APOBEC3A, CCL19, CCL4, CCL5,", 29],
  [CH, "Lymphocyte migration", "6.74E-25", "ADORA2A, AIM2, CCL19, CCL20, CCL23, CCL4,", 36],
  ["Hematological System Development and Function,Tissue...", "Quantity of leukocytes", "7.57E-25", "ADORA2A, AIM2, CALHM6, CCL19, CCL20,  C...", 54],
  ["Cellular Movement", "Cell movement of myeloid cells", "1.77E-24", "ADAM19, ADORA2A, AIM2, C1QTNF1, CCL19, ...", 43],
  ["Inflammatory Disease,Organismal Injury and Abnormalities", "Chronic inflammatory disorder", "1.82E-24", "ADORA2A, CA12, CCL19, CCL20, CCL23, CCL4,", 57],
  [CH, "Cell movement of phagocytes", "3.51E-24", "ADAM19, ADORA2A, AIM2, C1QTNF1, CCL19, ...", 43],
  ["Connective Tissue Disorders,Inflammatory Disease,Orga...", "Rheumatic Disease", "4.26E-24", "ADORA2A, CCL19, CCL20, CCL23, CCL4, CCL5,", 55],
  [CH, "Cell movement of lymphocytes", "4.89E-24", "ADORA2A, AIM2, CCL19, CCL20, CCL23, CCL4,", 37],
  ["Hereditary Disorder,Metabolic Disease,Organismal Injur...", "Type 1 interferonopathy", "1.45E-23", "CMPK2, EPSTI1, HERC5, IFI27, IFI44L, IFIT1,IR...", 14],
  [CH, "Cell movement of mononuclear leukocytes", "1.52E-23", "ADORA2A, AIM2, CCL19, CCL20, CCL23, CCL4,", 39],
];

const HEADS = [
  ["Categories", false, "w-[294px]"],
  ["Diseases or Functions Annotation", false, "w-[294px]"],
  ["p-value", true, "w-[293px]"],
  ["Molecules", true, "w-[297px]"],
  ["# Molecules", true, ""],
];

function ResultsTable() {
  return (
    <div className="flex h-[479px] overflow-hidden border-y border-l border-[#bcbcbc] bg-white">
      <div className="min-w-0 flex-1 overflow-hidden">
        <table className="w-full table-fixed border-collapse text-left text-[11px]">
          <thead>
            <tr className="h-5 bg-[#f1f1f1] text-[13px]">
              {HEADS.map(([h, closable, width], i) => (
                <th key={h} scope="col" className={"border-r-2 border-white p-0 font-normal " + width}>
                  <div className={"flex h-5 items-center whitespace-nowrap pr-[7px] " + (i === 2 ? "pl-[6px]" : "pl-1")}>
                    {i === 2 && (
                      <svg viewBox="0 0 9 10" className="mr-3 mt-1 h-[10px] w-[9px]" fill="none">
                        <path d="M1 9.500L4.500.5" stroke="#888" />
                        <path d="M4.500.5L8 9.500H1" stroke="#fff" />
                      </svg>
                    )}
                    <span className="pt-1">{h}</span>
                    <span className="ml-auto flex items-center gap-2 pb-1 text-[#1a3f7d]">
                      <button aria-label={"Filter " + h}><Funnel /></button>
                      {closable && <button aria-label={"Clear filter " + h}><Cross /></button>}
                    </span>
                  </div>
                </th>
              ))}
            </tr>
          </thead>
          <tbody>
            {ROWS.map(([cat, ann, p, mol, n]) => (
              <tr key={ann} className="h-[18px] whitespace-nowrap even:bg-[#f2f2f2]">
                <td className="overflow-hidden p-0 pl-[3px] leading-[18px]">{cat}</td>
                <td className="overflow-hidden p-0 pl-[6px] leading-4"><a href="#annotation" className={link}>{ann}</a></td>
                <td className="p-0 pl-[3px] leading-[18px]">{p}</td>
                <td className="overflow-hidden p-0 leading-4">
                  <div className="flex justify-between pl-[2px] pr-[6px]">
                    <a href="#molecules" className={link + " min-w-0 overflow-hidden font-bold"}>{mol}</a>
                    <a href="#all" className={link + " flex-none"}>...all {n}</a>
                  </div>
                </td>
                <td className="p-0 pl-[3px] leading-[18px]">{n}</td>
              </tr>
            ))}
          </tbody>
        </table>
      </div>
      <div className="w-[8px] flex-none bg-[#f7f7f7] pt-[2px]">
        <div className="h-[117px] w-[6px] rounded-full bg-[#dadada]" />
      </div>
    </div>
  );
}

const Dots = ({ vertical }) => (
  <span className={"flex gap-[2px] " + (vertical ? "flex-col" : "")}>
    {[0, 1, 2].map((i) => (
      <span key={i} className="h-[3px] w-[3px] rounded-full bg-[#ababab]" />
    ))}
  </span>
);

function AnalysisWindow() {
  return (
    <main className="mr-[166px] min-w-0 flex-1 border border-[#a9a9a9] bg-[#f1f1f1] pl-px text-[13px]">
      <div className="flex h-[25px] items-center bg-white pl-2 pr-[6px] pt-px">
        <h1>Expression Analysis - Upregulated_Genes - 2022-11-29 09:44 PM</h1>
        <div className="ml-auto flex items-center gap-[14px]">
          <button aria-label="Minimize" className="h-px w-2 bg-black" />
          <button aria-label="Maximize" className="h-2 w-2 border border-black" />
          <button aria-label="Close"><X className="h-3 w-3" strokeWidth={2} /></button>
        </div>
      </div>
      <Tabs items={TABS} active="Diseases & Functions" />
      <Tabs items={["Diseases and Bio Functions", "Tox Functions"]} active="Diseases and Bio Functions" />

      <div className="flex">
        <div className="flex w-[21px] flex-none flex-col">
          <div className="flex h-8 items-center justify-between pl-1">
            <button aria-label="Show filters" className="flex h-[30px] w-[10px] items-center justify-center rounded-[3px] bg-white pb-1 text-[15px] leading-none">»</button>
            <span className="flex flex-col gap-1 text-[#555]">
              <Chevron dir="left" className="w-[7px]" />
              <Chevron dir="right" className="w-[7px]" />
            </span>
          </div>
          <div className="flex flex-1 items-center">
            <div className="h-full w-4 border border-[#bcbcbc] bg-white">
              <div className="ml-auto h-full w-[9px] bg-[#f5f5f5] pl-px pt-[2px]">
                <div className="h-[54px] w-[6px] rounded-full bg-[#dadada]" />
              </div>
            </div>
            <span className="pl-px"><Dots vertical /></span>
          </div>
        </div>
        <div className="min-w-0 flex-1">
          <MapToolbar />
          <div className="flex h-[22px] items-center bg-[#c0c0c0] pl-[5px]">
            <span>Click squares below to explore</span>
            <span className="ml-[31px]">Currently Viewing:</span>
            <span className="ml-[9px] text-white">All</span>
          </div>
          <div className="border-l border-[#c0c0c0] pr-px">
            <Treemap />
          </div>
        </div>
      </div>

      <div className="relative flex h-[18px] items-start pl-1 text-[#555]">
        <Chevron dir="up" />
        <Chevron dir="down" className="ml-1" />
        <span className="absolute left-1/2 top-[3px] -translate-x-1/2"><Dots /></span>
      </div>

      <div className="flex h-[30px] items-start gap-[5px] pl-[7px] pr-[11px]">
        <Button disabled className="w-[150px]">Add To My Pathway</Button>
        <Button disabled className="w-[121px]">Add To My List</Button>
        <Button disabled className="w-[93px]">Annotation</Button>
        <Button disabled className="w-[101px]">Activity Plot</Button>
        <Button disabled className="w-[146px]">Display as Network</Button>
        <Button className="w-[129px]">Customize Table</Button>
        <button aria-label="Print" className="ml-[6px] mt-1"><Printer /></button>
        <button aria-label="Export table" className="ml-[6px] mt-1"><ExportTable /></button>
        <label htmlFor="page" className="ml-auto leading-5">p-value</label>
        <Select id="page" value="1.36E-47 - 1.25E-16 (1/5)" className="h-5 w-[181px]" />
        <button disabled aria-label="Previous page" className="mt-[2px] flex h-[15px] w-[21px] items-center justify-center border border-[#b0b0b0] bg-[#e2e2e2] pb-1 text-[18px] leading-none text-[#aaa]">«</button>
        <button aria-label="Next page" className="mt-[2px] flex h-[15px] w-[21px] items-center justify-center border border-[#1a5493] bg-white pb-1 text-[18px] leading-none text-[#1a5493]">»</button>
      </div>

      <ResultsTable />
      <div className="flex h-[27px] items-center pl-[5px] pt-px">Selected 0 / 500</div>
    </main>
  );
}

export default function App() {
  return (
    <div className="flex min-h-screen flex-col bg-[#5b2350] font-['Liberation_Sans',Arial,sans-serif] text-black">
      <SystemBar />
      <div className="mt-px flex flex-1 flex-col overflow-hidden rounded-[10px] bg-white">
        <TopArea />
        <div className="flex items-start">
          <ProjectManager />
          <AnalysisWindow />
        </div>
      </div>
    </div>
  );
}
